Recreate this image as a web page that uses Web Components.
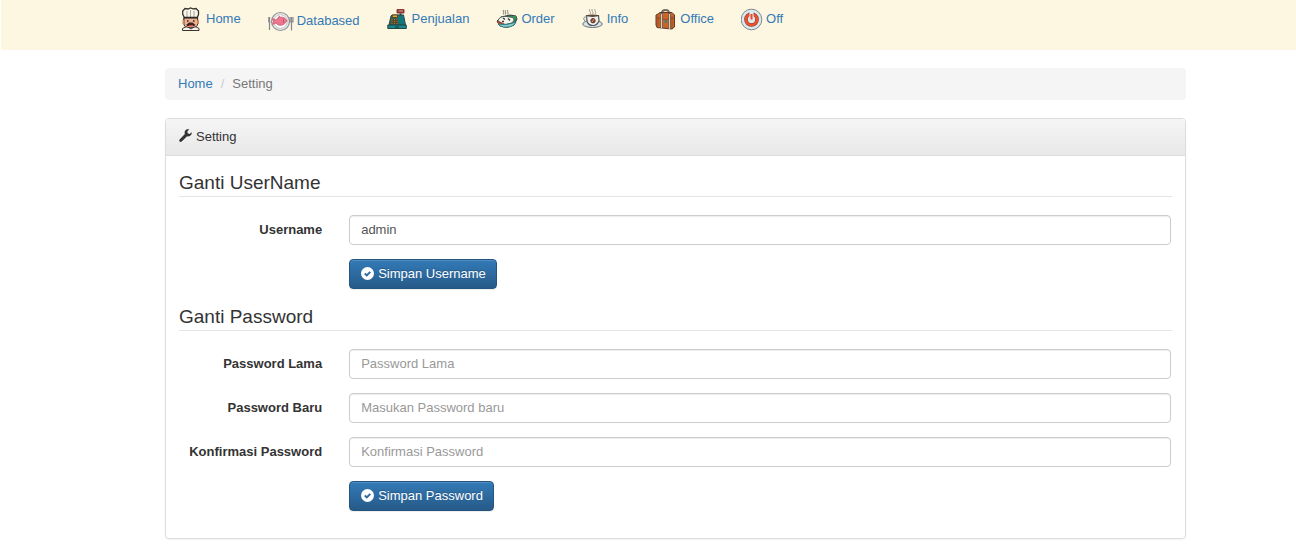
<!DOCTYPE html>
<html lang="id">
<head>
<meta charset="utf-8">
<title>Setting</title>
<style>
body{margin:0;background:#fff;color:#333;font:13px/18px "Liberation Sans",Arial,sans-serif}
main{margin:18px 110px 18px 165px}
</style>
</head>
<body>
<site-nav>
<nav-item href="#home" label="Home"><svg viewBox="0 0 24 24" width="24" height="24"><path d="M3 10 1.700 7V4L4 1.500 7 2 9.500 1 12 1.800 15 1.500 17.500 4V7.500L16.500 10V13H3Z" fill="#f8f5eb" stroke="#39352f" stroke-width="1.300"/><path d="M6 4V11M9.500 3V11M13 4V11" stroke="#aaa69d" stroke-width="1"/><path d="M3 11H16.500V18L14 21H5.500L3 18Z" fill="#efb18f" stroke="#443830"/><path d="M3 10.500H16.500" stroke="#292929" stroke-width="1.500"/><path d="M1.500 13H3.500V17H1.500ZM16 13H18V17H16Z" fill="#c88964"/><path d="M6 14H7.500M12 14H13.500" stroke="#222" stroke-width="1.500"/><path d="M5 18 8 15.500H11.500L14.500 18 13 19H6.500Z" fill="#3d2525"/><path d="M8 18H12V19.500H8Z" fill="#dc4a48"/><path d="M1.500 23.500V21.500L5 19.800 9.800 21 15 19.800 18 21.500V23.500Z" fill="#f5f3eb" stroke="#38352f"/><path d="m7 20 3 2 3-2" fill="none" stroke="#444"/></svg></nav-item>
<nav-item href="#databased" label="Databased"><svg viewBox="0 0 28 28" width="28" height="28"><circle cx="12.500" cy="14.500" r="9" fill="#e8e7e2" stroke="#929397" stroke-width="1.200"/><circle cx="12.500" cy="14.500" r="6.800" fill="#fff" stroke="#bbb" stroke-width=".8"/><path d="m4.500 11.500 3.500 1.500c2-3.500 8-4.500 11 .8-3 5.400-8.500 5.700-11 2.200l-3.500 1.500 1-3Z" fill="#ee7790" stroke="#c95870" stroke-width=".8"/><path d="m10 10.500 2-1.500M15.500 12v4" stroke="#b94b64" stroke-width=".8"/><path d="M1.500 10V23M.8 10V15H2.500M23.500 10V23.500M22 10V15H25V10" fill="none" stroke="#85898f" stroke-width="1.200"/></svg></nav-item>
<nav-item href="#penjualan" label="Penjualan"><svg viewBox="0 0 24 24" width="24" height="24"><path d="M10 2.500H17V6H10Z" fill="#7b3131" stroke="#963a36"/><path d="M11.500 4H16" stroke="#dfb9a2"/><path d="M13.500 6.500V9" stroke="#333" stroke-width="2"/><path d="M5 8H16.500L18.500 18H2L4 9Z" fill="#12777a" stroke="#23474a"/><path d="M5.500 8H10.500V10.500H5Z" fill="#eea22c" stroke="#594826"/><path d="M4 11.500H11L11.500 17.500H3Z" fill="#514c31"/><path d="M5 12V17M7.500 12V17M10 12V17" stroke="#a27833" stroke-dasharray="1 1"/><path d="M.8 18H19.300V21.500H.8Z" fill="#17898b" stroke="#244748"/><path d="M8 20H12" stroke="#173638"/></svg></nav-item>
<nav-item href="#order" label="Order"><svg viewBox="0 0 24 24" width="24" height="24"><path d="M7.500 3c-1 2 1 2 0 4.500M9.500 3c-1 2 1 2 0 4.500M11.800 3c-1 2 1 2 0 4.500" fill="none" stroke="#83827c"/><path d="M1 14 5 10 14 8 20 9 21 12 18 18 11 20.500 4 19Z" fill="#397465" stroke="#37403b"/><path d="M13 9 20 9 20.500 12 15 14Z" fill="#369659"/><path d="M2 14Q3 9 10 9.500L17 10.500Q19.500 13 16 16L9 17.500 3 17Z" fill="#f5f5e9" stroke="#3e4a45" stroke-width=".8"/><path d="M1 15Q2.500 13 5 15L9 17 2.500 17.500Z" fill="#a94535"/><path d="M7 11 9 12.500M12 11.500 14 13.500M6 14.500H8" stroke="#343f3a" stroke-width="1.400"/><path d="M2 17Q10 19 20 15L18 18Q11 22 4 19Z" fill="#85ced0" stroke="#317b80"/></svg></nav-item>
<nav-item href="#info" label="Info"><svg viewBox="0 0 24 24" width="24" height="24"><path d="M8 2c-2 2 2 3 0 5M10.500 2c-2 2 2 3 0 5M13 2c-1 2 2 3 0 5" fill="none" stroke="#8a8173" stroke-width=".8"/><ellipse cx="10.500" cy="17" rx="9.800" ry="3.500" fill="#d9e3e6" stroke="#66737a"/><path d="M4.500 8.500H16.500L17 14Q15 18.500 11 18.500 6 18.500 5 14Z" fill="#eef1ef" stroke="#4c5558" stroke-width="1.200"/><ellipse cx="10.500" cy="8.700" rx="5.800" ry="1.200" fill="#60483b"/><path d="M5 10Q1 9 2 13 3 15 6 14" fill="none" stroke="#7c8588"/><ellipse cx="11" cy="13.700" rx="2.200" ry="2.200" fill="#8c4a30" stroke="#603826"/><path d="m10 15 2-3" stroke="#db906b"/></svg></nav-item>
<nav-item href="#office" label="Office"><svg viewBox="0 0 24 24" width="24" height="24"><path d="M7 6Q7 3 10.500 3T14 6" fill="none" stroke="#796958" stroke-width="2"/><path d="M3 7 5 5.500 17 5.500 19.500 8V20L17 22 2 20.500 1 18V8Z" fill="#cb6429" stroke="#593a2b"/><path d="M2 11Q10 14 19 11M3 9V19M17 9V21" fill="none" stroke="#9a4a24"/><path d="M6.500 6V21M14.500 6V22" stroke="#6b6055" stroke-width="2.400"/><path d="M6.500 7V21M14.500 7V22" stroke="#d8d0b6"/><path d="M10.800 13V16" stroke="#327f89" stroke-width="2"/></svg></nav-item>
<nav-item href="#off" label="Off"><svg viewBox="0 0 24 24" width="24" height="24"><circle cx="10.500" cy="12.500" r="10.300" fill="#dceaee" stroke="#78888d"/><circle cx="10.500" cy="12.500" r="5.500" fill="#dceaee" stroke="#703d34" stroke-width="3.600"/><circle cx="10.500" cy="12.500" r="5.500" fill="none" stroke="#f4502b" stroke-width="2.600"/><path d="M10.500 5V11.500" stroke="#dceaee" stroke-width="4"/><path d="M10.500 7V12.500" stroke="#e8472e" stroke-width="2"/></svg></nav-item>
</site-nav>
<main>
<bread-crumb><a slot="parent" href="#home">Home</a>Setting</bread-crumb>
<setting-panel heading="Setting">
<form-section heading="Ganti UserName">
<text-field label="Username" value="admin"></text-field>
<save-button>Simpan Username</save-button>
</form-section>
<form-section heading="Ganti Password">
<text-field label="Password Lama" type="password" placeholder="Password Lama"></text-field>
<text-field label="Password Baru" type="password" placeholder="Masukan Password baru"></text-field>
<text-field label="Konfirmasi Password" type="password" placeholder="Konfirmasi Password"></text-field>
<save-button>Simpan Password</save-button>
</form-section>
</setting-panel>
</main>
<script>
const component = (name, render) => customElements.define(name, class extends HTMLElement {
  constructor() {
    super();
    this.attachShadow({mode: 'open'});
  }
  connectedCallback() {
    this.shadowRoot.innerHTML = render(this);
  }
});
const attr = (el, name) => el.getAttribute(name) || '';

component('site-nav', () => `<style>
:host{display:block;background:#fdf6e1;margin-left:1px}
nav{display:flex;flex-wrap:wrap;align-items:flex-start;gap:0 27px;min-height:43px;padding:7px 16px 0 180px}
</style><nav><slot></slot></nav>`);

component('nav-item', el => `<style>
:host{display:block}
a{display:flex;align-items:center;gap:1px;color:#337ab7;text-decoration:none}
::slotted(svg){display:block}
</style><a href="${attr(el, 'href')}"><slot></slot><span>${attr(el, 'label')}</span></a>`);

component('bread-crumb', () => `<style>
:host{display:block}
nav{display:flex;background:#f5f5f5;border-radius:4px;padding:7px 13px;color:#777}
::slotted(a){color:#337ab7;text-decoration:none}
.sep{color:#ccc;padding:0 8px}
</style><nav aria-label="Breadcrumb"><slot name="parent"></slot><span class="sep">/</span><span><slot></slot></span></nav>`);

component('setting-panel', el => `<style>
:host{display:block;margin-top:18px;border:1px solid #ddd;border-radius:4px;box-shadow:0 1px 2px rgba(0,0,0,.05)}
header{display:flex;align-items:center;gap:4px;padding:9px 13px;background:linear-gradient(#f5f5f5,#e8e8e8);border-bottom:1px solid #ddd;border-radius:3px 3px 0 0}
header svg{margin-bottom:2px}
.body{padding:13px}
</style><header><svg width="13" height="14" viewBox="0 0 13 14"><path d="M12.600 3.200 10.500 5 8.700 4.300 8.300 2.600 10.200.6C8.500 0 6.800.5 6 1.900 5.400 3 5.500 4.200 5.900 5L.6 10.600C-.5 12 1.100 13.800 2.700 12.600L8.100 7.200C9.300 7.700 10.800 7.400 11.800 6.300 12.600 5.400 12.900 4.200 12.600 3.200Z" fill="#333"/></svg><span>${attr(el, 'heading')}</span></header><div class="body"><slot></slot></div>`);

component('form-section', el => `<style>
:host{display:block}
h2{margin:0 0 18px;padding:3px 0;border-bottom:1px solid #e5e5e5;font-size:19px;line-height:21px;font-weight:400}
</style><section><h2>${attr(el, 'heading')}</h2><slot></slot></section>`);

component('text-field', el => `<style>
:host{display:grid;grid-template-columns:1fr 5fr;align-items:center;margin:0 -14px 14px}
label{padding-right:13px;font-weight:700;text-align:right;white-space:nowrap}
.control{padding:0 15px 0 14px}
input{display:block;box-sizing:border-box;width:100%;height:30px;padding:4px 11px 6px;border:1px solid #ccc;border-radius:4px;background:#fff;color:#555;font:inherit;box-shadow:inset 0 1px 1px rgba(0,0,0,.075)}
input::placeholder{color:#999;opacity:1}
</style><label for="field">${attr(el, 'label')}</label><div class="control"><input id="field" type="${attr(el, 'type') || 'text'}" value="${attr(el, 'value')}" placeholder="${attr(el, 'placeholder')}"></div>`);

component('save-button', () => `<style>
:host{display:grid;grid-template-columns:1fr 5fr;margin:0 -14px 14px}
.control{grid-column:2;padding:0 15px 0 14px}
button{display:flex;align-items:center;gap:4px;height:30px;padding:0 10px 0 11px;border:1px solid #245580;border-radius:4px;background:linear-gradient(#337ab7,#265a88);box-shadow:inset 0 1px 0 rgba(255,255,255,.15),0 1px 1px rgba(0,0,0,.075);color:#fff;font:inherit;text-shadow:0 -1px 0 rgba(0,0,0,.2);white-space:nowrap}
svg{margin-bottom:2px}
</style><div class="control"><button type="button"><svg width="13" height="13" viewBox="0 0 13 13"><circle cx="6.500" cy="6.500" r="6.500" fill="#fff"/><path d="M3.800 6.500 5.800 8.400 9.300 4.900" fill="none" stroke="#2d6ca2" stroke-width="2"/></svg><span><slot></slot></span></button></div>`);
</script>
</body>
</html>
